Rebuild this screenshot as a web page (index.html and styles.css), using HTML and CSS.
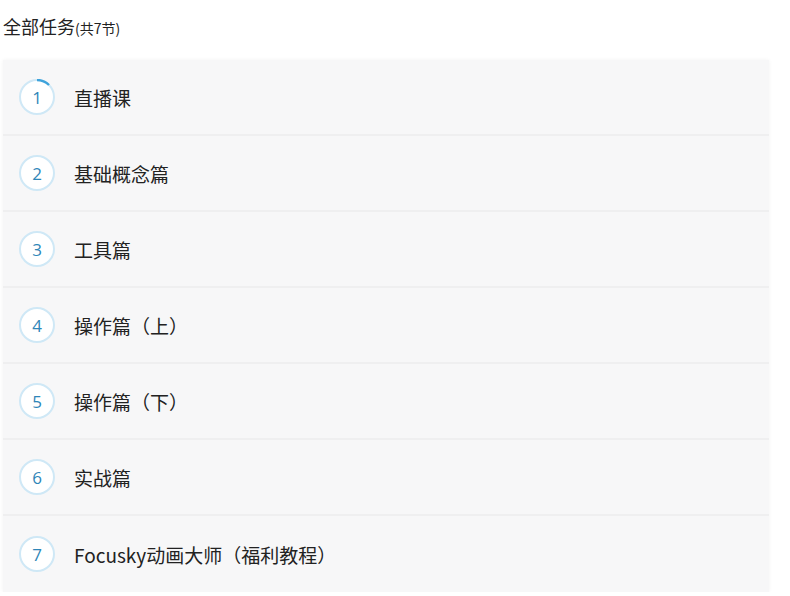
FILE: index.html
```html
<!DOCTYPE html>
<html lang="zh-CN">
<head>
<meta charset="utf-8">
<title>全部任务</title>
<link rel="stylesheet" href="styles.css">
</head>
<body>
<div class="page">
  <h2 class="heading">全部任务<span class="count">(共7节)</span></h2>
  <ul class="list">
    <li class="item">
      <span class="num">1<svg class="arc" viewBox="0 0 36 36"><path d="M18 1 A17 17 0 0 1 30 6" /></svg></span>
      <span class="name">直播课</span>
    </li>
    <li class="item"><span class="num">2</span><span class="name">基础概念篇</span></li>
    <li class="item"><span class="num">3</span><span class="name">工具篇</span></li>
    <li class="item"><span class="num">4</span><span class="name">操作篇（上）</span></li>
    <li class="item"><span class="num">5</span><span class="name">操作篇（下）</span></li>
    <li class="item"><span class="num">6</span><span class="name">实战篇</span></li>
    <li class="item"><span class="num">7</span><span class="name">Focusky动画大师（福利教程）</span></li>
  </ul>
</div>
</body>
</html>
```
FILE: styles.css
```css
* { box-sizing: border-box; }
html, body { margin: 0; padding: 0; background: #fff; }
body { font-family: "Noto Sans CJK SC", "Noto Sans", sans-serif; color: #222; }
.page { padding: 12px 21px 0 3px; }
.heading {
  margin: 0;
  font-weight: 400;
  font-size: 18px;
  line-height: 28px;
  color: #222;
}
.count { font-size: 14px; }
.list {
  list-style: none;
  margin: 18px 0 0 0;
  padding: 0;
  background: #f7f7f8;
  box-shadow: 0 0 4px rgba(0,0,0,0.05);
}
.item {
  display: flex;
  align-items: center;
  gap: 19px;
  height: 76px;
  padding-left: 16px;
  border-bottom: 2px solid #efeff0;
}
.item:last-child { border-bottom: none; }
.num {
  position: relative;
  width: 36px;
  height: 36px;
  border: 2px solid #cfe8f6;
  border-radius: 50%;
  display: flex;
  align-items: center;
  justify-content: center;
  font-size: 17px;
  color: #2f86b8;
  font-family: "Open Sans", "Noto Sans", sans-serif;
  background: #fff;
  flex: none;
}
.arc {
  position: absolute;
  left: -2px;
  top: -2px;
  width: 36px;
  height: 36px;
  fill: none;
  stroke: #3fa3db;
  stroke-width: 2.4;
}
.name {
  font-size: 19px;
  color: #222;
}
```
